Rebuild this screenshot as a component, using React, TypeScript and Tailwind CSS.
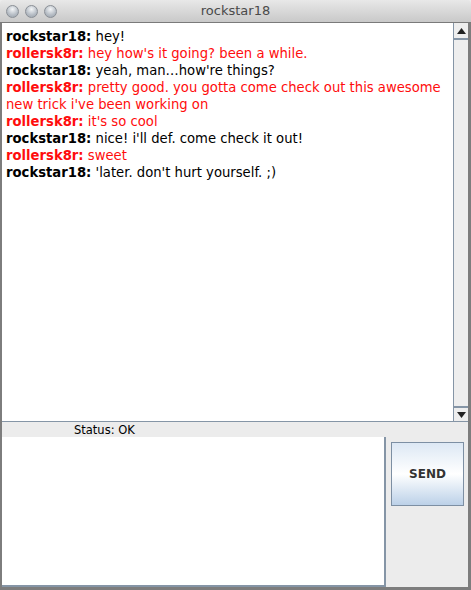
import React from 'react';

type Msg = { from: string; text: string; red?: boolean };

const messages: Msg[] = [
    { from: 'rockstar18', text: 'hey!' },
    { from: 'rollersk8r', text: "hey how's it going? been a while.", red: true },
    { from: 'rockstar18', text: "yeah, man\u2026how're things?" },
    { from: 'rollersk8r', text: "pretty good. you gotta come check out this awesome new trick i've been working on", red: true },
    { from: 'rollersk8r', text: "it's so cool", red: true },
    { from: 'rockstar18', text: "nice! i'll def. come check it out!" },
    { from: 'rollersk8r', text: 'sweet', red: true },
    { from: 'rockstar18', text: "'later. don't hurt yourself. ;)" },
];

const Light = () => (
    <span className="w-[13px] h-[13px] rounded-full border border-[#8a8f96] bg-[radial-gradient(circle_at_50%_30%,#f4f6f8,#b5bcc4_60%,#9aa2ab)]" />
);

const App: React.FC = () => {
    return (
        <div className="w-[471px] h-[590px] flex flex-col bg-[#ececec] overflow-hidden" style={{ fontFamily: '"DejaVu Sans", sans-serif' }}>
            {/* title bar */}
            <div className="h-[23px] flex items-center relative bg-gradient-to-b from-[#e8e8e8] to-[#c9c9c9] border-b border-[#7a7a7a] rounded-t-[4px]">
                <div className="flex gap-[6px] pl-[6px]">
                    <Light />
                    <Light />
                    <Light />
                </div>
                <div className="absolute inset-0 flex items-center justify-center text-[13px] text-[#4a4a4a]">rockstar18</div>
            </div>

            <div className="flex-1 flex flex-col border-l-2 border-r-[3px] border-b-[3px] border-[#7d7d7d]">
                {/* chat */}
                <div className="h-[399px] flex border-b border-[#8595a6]">
                    <div className="flex-1 bg-white pl-[4px] pr-2 pt-[5px] text-[13.2px] leading-[17px]">
                        {messages.map((m, i) => (
                            <div key={i} className={m.red ? 'text-[#ff0d0d]' : 'text-black'}>
                                <span className="font-bold">{m.from}:</span> {m.text}
                            </div>
                        ))}
                    </div>
                    <div className="w-[15px] flex flex-col bg-[#eeeeee] border-l border-[#8595a6]">
                        <div className="h-[17px] flex items-center justify-center border-b-2 border-[#8595a6]">
                            <svg width="9" height="6" viewBox="0 0 9 6"><path d="M4.5 0 L9 6 L0 6 Z" fill="#222" /></svg>
                        </div>
                        <div className="flex-1" />
                        <div className="h-[15px] flex items-center justify-center border-t-2 border-[#8595a6]">
                            <svg width="9" height="6" viewBox="0 0 9 6"><path d="M0 0 L9 0 L4.5 6 Z" fill="#222" /></svg>
                        </div>
                    </div>
                </div>

                {/* status */}
                <div className="h-[15px] flex items-center pt-[3px] pl-[72px] text-[11.5px] text-black">Status: OK</div>

                {/* input row */}
                <div className="flex-1 flex">
                    <div className="w-[384px] bg-white border-r-2 border-b-2 border-[#8595a6]" />
                    <div className="flex-1 pl-[5px] pt-[5px]">
                        <button className="w-[73px] h-[64px] border border-[#7d8fa3] bg-gradient-to-b from-[#dde8f4] via-white to-[#bcd1e8] text-[12px] font-bold text-[#333]">
                            SEND
                        </button>
                    </div>
                </div>
            </div>
        </div>
    );
};

export default App;
